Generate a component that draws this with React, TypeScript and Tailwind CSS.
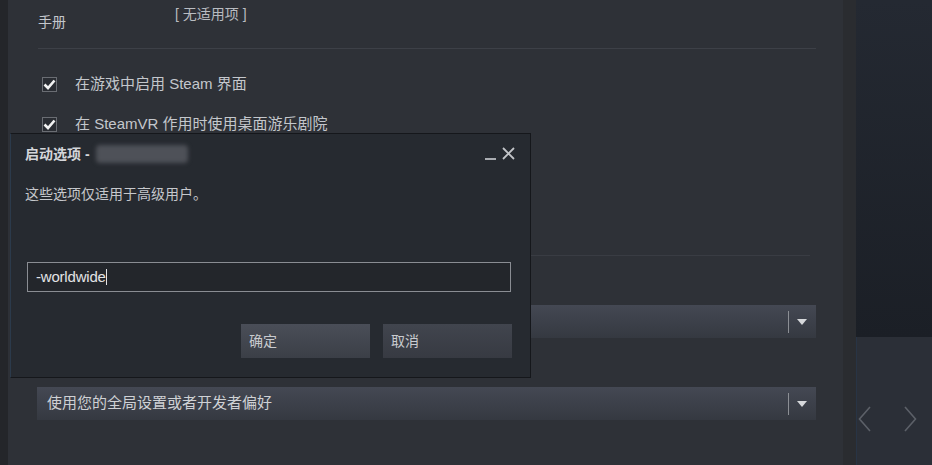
import React from "react";

const font = { fontFamily: '"Liberation Sans", "Noto Sans CJK SC", sans-serif' };

function Check({ label }: { label: string }) {
  return (
    <div className="flex items-center h-[14px] ml-[4px]">
      <div className="w-[15px] h-[15px] border border-[#6a6d73] bg-[#2a2d33] flex items-center justify-center">
        <svg width="13" height="11" viewBox="0 0 13 11">
          <path d="M1.5 5.5 L5 9 L11.5 1.5" stroke="#f2f2f2" strokeWidth="2.6" fill="none" />
        </svg>
      </div>
      <span className="ml-[18px] text-[15px] text-[#c4c7cc]">{label}</span>
    </div>
  );
}

function Dropdown({ text }: { text?: string }) {
  return (
    <div className="ml-[-1px] w-[779px] h-[33px] flex items-center bg-gradient-to-b from-[#444853] to-[#353941]">
      <span className="flex-1 pl-[10px] text-[15px] text-[#cfd1d5]">{text}</span>
      <div className="w-px h-[22px] bg-[#8c8f95]" />
      <svg width="10" height="6" viewBox="0 0 10 6" className="ml-[8px] mr-[9px]">
        <path d="M0 0 H10 L5 6 Z" fill="#d6d8db" />
      </svg>
    </div>
  );
}

export default function App() {
  return (
    <div className="relative w-[932px] h-[465px] flex overflow-hidden bg-[#25272b]" style={font}>
      <div className="w-[8px] bg-[#24262a]" />
      <div className="w-[835px] bg-[#2e3137] pl-[30px] flex flex-col">
        <div className="h-[48px] flex items-start">
          <div className="w-[137px] pt-[14px] text-[14px] text-[#c4c7cc] leading-[16px]">手册</div>
          <div className="pt-[6px] text-[14px] text-[#b9bcc1] leading-[16px]">[ 无适用项 ]</div>
        </div>
        <div className="h-px w-[778px] bg-[#3d4047]" />
        <div className="mt-[28px]">
          <Check label="在游戏中启用 Steam 界面" />
        </div>
        <div className="mt-[26px]">
          <Check label="在 SteamVR 作用时使用桌面游乐剧院" />
        </div>
        <div className="mt-[124px] h-px w-[772px] bg-[#393c43]" />
        <div className="mt-[49px]">
          <Dropdown />
        </div>
        <div className="mt-[49px]">
          <Dropdown text="使用您的全局设置或者开发者偏好" />
        </div>
      </div>
      <div className="w-[13px] bg-[#2a2c30]" />
      <div className="flex-1 flex flex-col">
        <div className="h-[337px] bg-gradient-to-b from-[#242932] to-[#1b1f26]" />
        <div className="flex-1 bg-[#2b2f37] border-l border-[#283445] flex items-start pt-[69px] pl-[1px] gap-[33px]">
          <svg width="13" height="26" viewBox="0 0 13 26">
            <path d="M12 1 L1.5 13 L12 25" stroke="#5c6068" strokeWidth="1.6" fill="none" />
          </svg>
          <svg width="13" height="26" viewBox="0 0 13 26">
            <path d="M1 1 L11.5 13 L1 25" stroke="#5c6068" strokeWidth="1.6" fill="none" />
          </svg>
        </div>
      </div>

      <div className="absolute left-[10px] top-[133px] w-[521px] h-[245px] bg-[#262a30] border border-[#15171b] border-l-[#2b3a4b] flex flex-col">
        <div className="h-[40px] flex items-center pl-[14px] pr-[15px]">
          <span className="text-[14px] font-bold text-[#d4d6da]">启动选项 -</span>
          <div className="ml-[6px] w-[92px] h-[18px] bg-[#4e5158] blur-[2px] rounded-sm" />
          <div className="flex-1" />
          <div className="w-[11px] h-[2px] bg-[#a9acb1] mt-[9px]" />
          <svg width="13" height="13" viewBox="0 0 13 13" className="ml-[6px] mb-[2px]">
            <path d="M1 1 L12 12 M12 1 L1 12" stroke="#c2c4c8" strokeWidth="1.8" />
          </svg>
        </div>
        <div className="pl-[14px] mt-[12px] text-[14px] text-[#c6c8cc] leading-[16px]">这些选项仅适用于高级用户。</div>
        <div className="ml-[16px] mt-[60px] w-[484px] h-[30px] border border-[#8a8d93] bg-[#23262b] flex items-center pl-[8px]">
          <span className="text-[15px] text-[#e2e3e5] tracking-[-0.2px]">-worldwide</span>
          <div className="w-px h-[16px] bg-[#e2e3e5]" />
        </div>
        <div className="mt-[32px] flex justify-end gap-[13px] pr-[18px]">
          <div className="w-[129px] h-[34px] bg-gradient-to-b from-[#4a4e58] to-[#3b3f47] flex items-center pl-[8px] text-[14px] text-[#c9cbcf]">确定</div>
          <div className="w-[129px] h-[34px] bg-gradient-to-b from-[#41454e] to-[#373a42] flex items-center pl-[8px] text-[14px] text-[#c9cbcf]">取消</div>
        </div>
      </div>
    </div>
  );
}
